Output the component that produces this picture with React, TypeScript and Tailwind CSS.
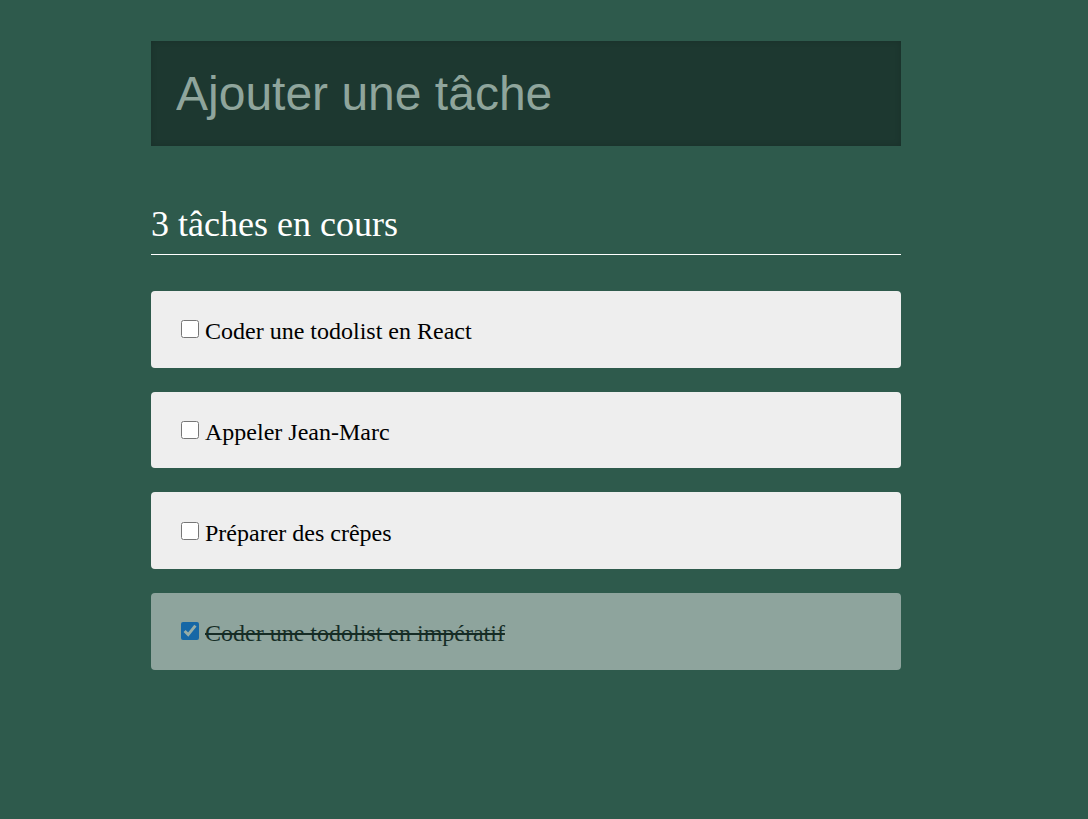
import { useState } from "react";

type Task = { id: number; label: string; done: boolean };

const initialTasks: Task[] = [
  { id: 1, label: "Coder une todolist en React", done: false },
  { id: 2, label: "Appeler Jean-Marc", done: false },
  { id: 3, label: "Préparer des crêpes", done: false },
  { id: 4, label: "Coder une todolist en impératif", done: true },
];

export default function App() {
  const [tasks, setTasks] = useState<Task[]>(initialTasks);
  const [value, setValue] = useState("");

  const remaining = tasks.filter((t) => !t.done).length;

  const toggle = (id: number) =>
    setTasks((prev) => prev.map((t) => (t.id === id ? { ...t, done: !t.done } : t)));

  return (
    <div className="min-h-screen bg-[#2e5a4c]">
      <div className="ml-[151px] w-[750px] pt-[41px]">
        {/* Add task */}
        <form
          onSubmit={(e) => {
            e.preventDefault();
            if (!value.trim()) return;
            setTasks((prev) => [{ id: Date.now(), label: value.trim(), done: false }, ...prev]);
            setValue("");
          }}
        >
          <input
            value={value}
            onChange={(e) => setValue(e.target.value)}
            placeholder="Ajouter une tâche"
            className="block h-[105px] w-full bg-[#1d3830] px-[25px] text-[48px] text-[#8fa59c] placeholder:text-[#8fa59c] outline-none shadow-[inset_0_0_6px_rgba(0,0,0,0.15)] font-['Liberation_Sans',Arial,sans-serif]"
          />
        </form>

        {/* Counter */}
        <h2 className="mt-[58px] border-b border-white pb-[9px] text-[36px] leading-[41px] text-white font-['Liberation_Serif','Times_New_Roman',serif]">
          {remaining} tâches en cours
        </h2>

        {/* List */}
        <ul className="mt-[36px] flex flex-col gap-[24px] font-['Liberation_Serif','Times_New_Roman',serif]">
          {tasks.map((task) => (
            <li
              key={task.id}
              className={
                task.done
                  ? "flex h-[76.67px] items-center rounded-[4px] bg-[#eeeeee] pl-[30px] pt-[4px] opacity-50"
                  : "flex h-[76.67px] items-center rounded-[4px] bg-[#eeeeee] pl-[30px] pt-[4px]"
              }
            >
              <label className="flex items-center text-[24px] text-black">
                <input
                  type="checkbox"
                  checked={task.done}
                  onChange={() => toggle(task.id)}
                  className="m-0 mb-[4px] mr-[6px] h-[18px] w-[18px]"
                />
                <span className={task.done ? "line-through" : ""}>{task.label}</span>
              </label>
            </li>
          ))}
        </ul>
      </div>
    </div>
  );
}
